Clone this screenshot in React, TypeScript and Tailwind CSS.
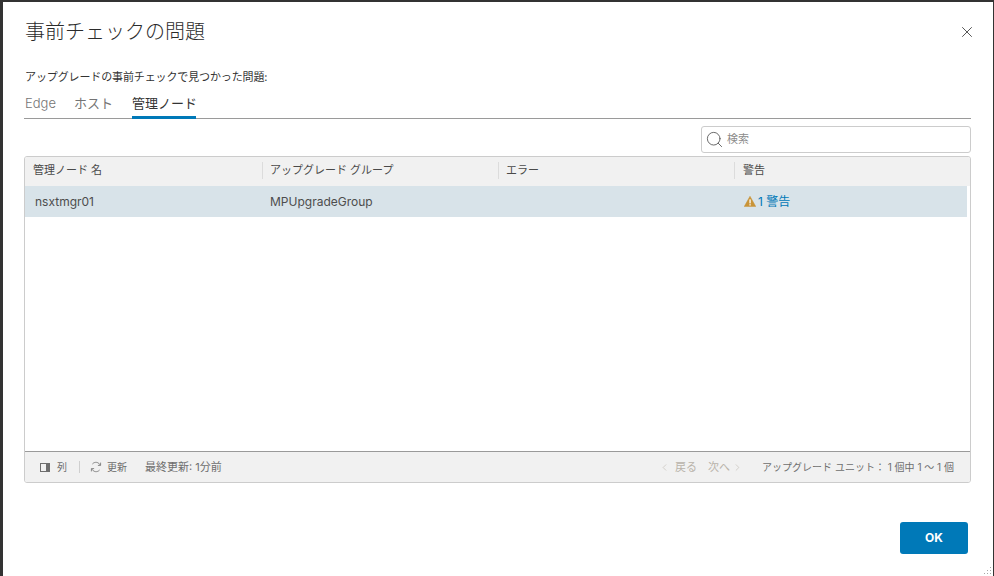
import { X, Search, ChevronLeft, ChevronRight } from "lucide-react";

const font = "font-['Inter','Noto_Sans_CJK_JP',sans-serif]";

const columns = ["管理ノード 名", "アップグレード グループ", "エラー", "警告"];

function ColumnsIcon() {
  return (
    <svg width="10" height="9" viewBox="0 0 10 9" className="shrink-0">
      <rect x="0.5" y="0.5" width="9" height="8" fill="none" stroke="#6e6e6e" />
      <rect x="6" y="0.5" width="3.5" height="8" fill="#6e6e6e" />
    </svg>
  );
}

function RefreshIcon() {
  return (
    <svg width="12" height="12" viewBox="0 0 12 12" fill="none" stroke="#6e6e6e" strokeWidth="0.8" className="shrink-0">
      <path d="M10.2 4.2A4.6 4.6 0 0 0 2.4 3" />
      <path d="M1.8 7.8A4.6 4.6 0 0 0 9.6 9" />
      <path d="M10.6 1.6v2.8H7.9" />
      <path d="M1.4 10.4V7.6h2.7" />
    </svg>
  );
}

function WarnIcon() {
  return (
    <svg width="12" height="11" viewBox="0 0 12 11" className="shrink-0">
      <path d="M6 0.3 11.8 10.6H0.2Z" fill="#c99438" stroke="#c99438" strokeWidth="0.5" strokeLinejoin="round" />
      <rect x="5.4" y="3.4" width="1.3" height="4" fill="#fff" />
      <rect x="5.4" y="8.2" width="1.3" height="1.3" fill="#fff" />
    </svg>
  );
}

function ResizeGrip() {
  const dots = ["11,1", "8,4", "11,4", "5,7", "8,7", "11,7"];
  return (
    <svg width="14" height="10" viewBox="0 0 14 10" className="absolute bottom-0 right-0">
      {dots.map((d) => {
        const [x, y] = d.split(",");
        return <rect key={d} x={x} y={y} width="1" height="1" fill="#a8a8a8" />;
      })}
    </svg>
  );
}

export default function App() {
  return (
    <div className={`h-[576px] w-[994px] overflow-hidden bg-[#333333] pl-[3px] pr-px pt-[2px] ${font}`}>
      <div className="relative flex h-[574px] flex-col bg-white px-[21px]">
        {/* header */}
        <div className="flex h-[60px] items-center justify-between pl-px">
          <h1 className="text-xl leading-none font-light text-[#2b2b2b]">事前チェックの問題</h1>
          <button className="mr-[-4px] text-[#444]">
            <X size={18} strokeWidth={1.2} />
          </button>
        </div>

        <p className="mt-[6px] pl-px text-[11px] leading-[18px] tracking-[-0.12px] text-[#333]">アップグレードの事前チェックで見つかった問題:</p>

        {/* tabs */}
        <div className="mt-[7px] flex h-[26px] w-[947px] gap-[19px] border-b border-[#9a9a9a] pl-px text-[13px] leading-[20px] text-[#747474]">
          <span className="-mr-px font-light">Edge</span>
          <span>ホスト</span>
          <span className="-mb-px h-[26px] w-[64px] border-b-[3px] border-[#0079b8] whitespace-nowrap text-[#333]">管理ノード</span>
        </div>

        <div className="mt-[7px] flex w-[947px] justify-end">
          <div className="flex h-[27px] w-[270px] items-center gap-[3px] rounded-[3px] border border-[#cccccc] pl-[3px]">
            <Search size={19} strokeWidth={1.1} className="text-[#555]" />
            <span className="text-[11px] text-[#8c8c8c]">検索</span>
          </div>
        </div>

        {/* grid */}
        <div className="mt-[3px] flex h-[327px] w-[947px] flex-col overflow-hidden rounded-[3px] border border-[#cccccc]">
          <div className="grid h-[29px] shrink-0 grid-cols-[237px_236px_236px_1fr] items-center bg-[#f1f1f1] pb-[2px] text-[11px] text-[#4a4a4a]">
            {columns.map((c, i) => (
              <div key={c} className={i === 0 ? "pl-2" : i === 3 ? "border-l border-[#dcdcdc] pl-2" : "border-l border-[#dcdcdc] pl-[7px]"}>
                {c}
              </div>
            ))}
          </div>
          <div className="flex-1">
            <div className="grid h-[31px] w-[942px] grid-cols-[237px_236px_236px_1fr] items-center bg-[#d8e3e9] text-xs text-[#4d4d4d]">
              <div className="pl-[10px]">nsxtmgr01</div>
              <div className="pl-2">MPUpgradeGroup</div>
              <div />
              <div className="flex items-center gap-[2px] pl-[10px] text-[#0079b8]">
                <WarnIcon />
                <span>1 警告</span>
              </div>
            </div>
          </div>
          <div className="flex h-[31px] shrink-0 items-center border-t border-[#9a9a9a] bg-[#f1f1f1] pl-[15px] pr-[16px] text-[10px] text-[#6e6e6e]">
            <ColumnsIcon />
            <span className="ml-[7px]">列</span>
            <span className="ml-[12px] h-[12px] w-px bg-[#cfcfcf]" />
            <span className="ml-[10px]"><RefreshIcon /></span>
            <span className="ml-[5px]">更新</span>
            <span className="ml-[18px] text-[11px]">最終更新: 1分前</span>
            <div className="ml-auto flex items-center text-[11px] text-[#b9b3aa]">
              <ChevronLeft size={11} strokeWidth={1.2} />
              <span className="ml-[5px]">戻る</span>
              <span className="ml-[11px]">次へ</span>
              <ChevronRight size={11} strokeWidth={1.2} className="ml-[2px]" />
            </div>
            <span className="ml-[19px]">アップグレード ユニット： 1 個中 1 ～ 1 個</span>
          </div>
        </div>

        {/* footer */}
        <div className="mt-[39px] flex w-[944px] justify-end">
          <button className="h-[32px] w-[68px] rounded-[3px] bg-[#0079b8] text-xs font-bold text-white">OK</button>
        </div>
        <ResizeGrip />
      </div>
    </div>
  );
}
